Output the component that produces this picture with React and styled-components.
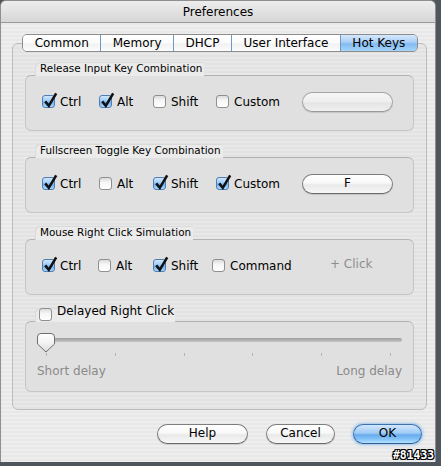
import React from 'react';
import styled, { createGlobalStyle } from 'styled-components';

const Global = createGlobalStyle`
  html, body { margin: 0; padding: 0; }
  body {
    width: 441px; height: 466px; overflow: hidden;
    background: #4e555d;
    font-family: "DejaVu Sans", "Liberation Sans", sans-serif;
    color: #000;
  }
`;

const Page = styled.div`
  position: relative;
  width: 441px;
  height: 466px;
`;

const Window = styled.div`
  width: 436px;
  height: 462px;
  box-sizing: border-box;
  border: 1px solid #8f8f8f;
  border-bottom: none;
  border-radius: 6px 6px 0 0;
  overflow: hidden;
  display: flex;
  flex-direction: column;
  background: repeating-linear-gradient(to bottom, #eeeeee 0px, #eeeeee 2px, #e8e8e8 2px, #e8e8e8 4px);
`;

const TitleBar = styled.div`
  height: 22px;
  box-sizing: border-box;
  flex: none;
  border-bottom: 1px solid #9a9a9a;
  background: linear-gradient(#ededed, #e2e2e2 50%, #d6d6d6);
  display: flex;
  align-items: center;
  justify-content: center;
  font-size: 12px;
  line-height: 14px;
  padding-top: 1px;
`;

const Body = styled.div`
  flex: 1;
  display: flex;
  flex-direction: column;
  padding: 11px 8px 0 11px;
`;

const TabRow = styled.div`
  display: flex;
  align-self: center;
  height: 18px;
  box-sizing: border-box;
  border: 1px solid #8c8c8c;
  border-radius: 5px;
  overflow: hidden;
  position: relative;
  z-index: 1;
  margin-left: 1px;
`;

const Tab = styled.div`
  padding: 0 11.5px;
  font-size: 12px;
  line-height: 16px;
  white-space: nowrap;
  background: ${p => p.$active
    ? 'linear-gradient(#d6e8fc 0%, #a9cff5 45%, #82bbf1 55%, #a6d4fb 100%)'
    : 'linear-gradient(#ffffff 0%, #fbfbfb 50%, #f1f1f1 55%, #fcfcfc 100%)'};
  & + & { border-left: 1px solid ${p => p.$active ? '#6f98c8' : '#c9c9c9'}; }
`;

const Panel = styled.div`
  margin-top: -9px;
  border: 1px solid #bcbcbc;
  border-radius: 6px;
  background: rgba(0, 0, 0, 0.025);
  padding: 18px 12px 17px 12px;
  display: flex;
  flex-direction: column;
  gap: 13px;
`;

const Group = styled.div`
  display: flex;
  flex-direction: column;
  align-items: flex-start;
`;

const GroupLabel = styled.div`
  margin-left: 10px;
  margin-bottom: -1px;
  height: 14px;
  padding: 0 2px 0 5px;
  display: flex;
  align-items: flex-start;
  gap: 5px;
  font-size: ${p => p.$small ? '10.4px' : '12px'};
  line-height: 13px;
  background: #ebebeb;
  border-top-left-radius: 5px;
  box-shadow: inset 1px 1px 0 rgba(0, 0, 0, 0.07);
  position: relative;
  z-index: 1;
  ${p => p.$check ? 'padding-left: 4px; padding-right: 1px;' : ''}
`;

const LabelText = styled.span`
  margin-top: -3px;
`;

const GroupBox = styled.div`
  align-self: stretch;
  height: ${p => p.$h}px;
  box-sizing: border-box;
  border: 1px solid #c6c6c6;
  border-top-color: #b2b2b2;
  border-radius: 6px;
  background: #e0e0e0;
  display: flex;
  flex-direction: column;
`;

const Row = styled.div`
  flex: 1;
  display: grid;
  grid-template-columns: ${p => p.$cols};
  align-items: center;
  padding: 0 0 3px 16px;
`;

const CheckItem = styled.label`
  display: flex;
  align-items: center;
  gap: 5px;
  font-size: 12px;
  line-height: 14px;
  white-space: nowrap;
`;

const CheckBox = styled.span`
  position: relative;
  flex: none;
  width: 13px;
  height: 13px;
  box-sizing: border-box;
  border-radius: 3px;
  border: 1px solid ${p => p.$checked ? '#4d7db5' : '#8f8f8f'};
  background: ${p => p.$checked
    ? 'linear-gradient(#cfe5fc 0%, #9ecbf5 45%, #6eadef 55%, #a9d8fc 100%)'
    : 'linear-gradient(#dcdcdc 0%, #f6f6f6 40%, #ffffff 100%)'};
`;

const Tick = styled.svg`
  position: absolute;
  left: 0px;
  top: -3px;
  width: 14px;
  height: 15px;
  overflow: visible;
`;

const PillButton = styled.div`
  width: ${p => p.$w}px;
  height: 20px;
  box-sizing: border-box;
  border-radius: 10px;
  border: 1px solid ${p => p.$primary ? '#3f72ad' : p.$dim ? '#a6a6a6' : '#7d7d7d'};
  border-bottom-color: ${p => p.$primary ? '#2d5d96' : p.$dim ? '#9a9a9a' : '#6a6a6a'};
  background: ${p => p.$primary
    ? 'linear-gradient(#d2e7fc 0%, #9fcbf5 45%, #67abee 55%, #8fcbfa 85%, #b8e2fd 100%)'
    : p.$dim
      ? 'linear-gradient(#f6f6f6 0%, #eeeeee 50%, #e4e4e4 55%, #f0f0f0 100%)'
      : 'linear-gradient(#ffffff 0%, #f8f8f8 45%, #e9e9e9 55%, #f7f7f7 100%)'};
  box-shadow: ${p => p.$primary ? '0 0 3px 1px rgba(90, 160, 235, 0.55)' : '0 1px 1px rgba(0,0,0,0.12)'};
  display: flex;
  align-items: center;
  justify-content: center;
  font-size: 12px;
  line-height: 14px;
  padding-bottom: 2px;
`;

const Hint = styled.span`
  font-size: 12px;
  color: #8e8e8e;
  margin-top: -3px;
`;

const SliderWrap = styled.div`
  padding: 11px 11px 0 11px;
  display: flex;
  flex-direction: column;
`;

const SliderArea = styled.div`
  position: relative;
  height: 19px;
`;

const Track = styled.div`
  margin-top: 5px;
  height: 4px;
  border-radius: 2px;
  background: linear-gradient(#9d9d9d, #c4c4c4);
`;

const Thumb = styled.svg`
  position: absolute;
  left: 0;
  top: 0;
  width: 18px;
  height: 20px;
`;

const Ticks = styled.div`
  margin-top: 1px;
  height: 3px;
  display: flex;
  justify-content: space-between;
  padding: 0 11px 0 9px;
`;

const TickMark = styled.span`
  width: 1px;
  height: 3px;
  background: #b4b4b4;
`;

const SliderLabels = styled.div`
  margin-top: 8px;
  display: flex;
  justify-content: space-between;
  font-size: 12px;
  line-height: 15px;
  color: #8a8a8a;
`;

const Footer = styled.div`
  display: flex;
  justify-content: flex-end;
  gap: 18px;
  margin: 14px 5px 0 0;
`;

const Watermark = styled.div`
  position: absolute;
  left: 393px;
  top: 449px;
  font-family: "DejaVu Sans Mono", monospace;
  font-weight: bold;
  font-size: 11.4px;
  line-height: 13px;
  color: #fff;
  text-shadow: 1px 0 0 #000, -1px 0 0 #000, 0 1px 0 #000, 0 -1px 0 #000, 1px 1px 0 #000, -1px -1px 0 #000, 1px -1px 0 #000, -1px 1px 0 #000;
`;

function Check({ checked, label }) {
  return (
    <CheckItem>
      <CheckBox $checked={checked}>
        {checked && (
          <Tick viewBox="0 0 14 15">
            <path d="M2.2 8.4 L5.8 12.8 L13.2 0.4" fill="none" stroke="#111" strokeWidth="2.6" strokeLinejoin="miter" />
          </Tick>
        )}
      </CheckBox>
      {label}
    </CheckItem>
  );
}

const tabs = ['Common', 'Memory', 'DHCP', 'User Interface', 'Hot Keys'];

export default function App() {
  return (
    <Page>
      <Global />
      <Window>
        <TitleBar>Preferences</TitleBar>
        <Body>
          <TabRow>
            {tabs.map(t => <Tab key={t} $active={t === 'Hot Keys'}>{t}</Tab>)}
          </TabRow>
          <Panel>
            <Group>
              <GroupLabel $small>Release Input Key Combination</GroupLabel>
              <GroupBox $h={56}>
                <Row $cols="57px 54px 63px 86px 91px">
                  <Check checked label="Ctrl" />
                  <Check checked label="Alt" />
                  <Check label="Shift" />
                  <Check label="Custom" />
                  <PillButton $w={91} $dim />
                </Row>
              </GroupBox>
            </Group>
            <Group>
              <GroupLabel $small>Fullscreen Toggle Key Combination</GroupLabel>
              <GroupBox $h={56}>
                <Row $cols="57px 54px 63px 86px 91px">
                  <Check checked label="Ctrl" />
                  <Check label="Alt" />
                  <Check checked label="Shift" />
                  <Check checked label="Custom" />
                  <PillButton $w={91}>F</PillButton>
                </Row>
              </GroupBox>
            </Group>
            <Group>
              <GroupLabel $small>Mouse Right Click Simulation</GroupLabel>
              <GroupBox $h={56}>
                <Row $cols="56px 55px 59px 118px auto">
                  <Check checked label="Ctrl" />
                  <Check label="Alt" />
                  <Check checked label="Shift" />
                  <Check label="Command" />
                  <Hint>+ Click</Hint>
                </Row>
              </GroupBox>
            </Group>
            <Group>
              <GroupLabel $check>
                <CheckBox />
                <LabelText>Delayed Right Click</LabelText>
              </GroupLabel>
              <GroupBox $h={71}>
                <SliderWrap>
                  <SliderArea>
                    <Track />
                    <Thumb viewBox="0 0 18 20">
                      <defs>
                        <linearGradient id="thumbG" x1="0" y1="0" x2="0" y2="1">
                          <stop offset="0" stopColor="#ffffff" />
                          <stop offset="0.5" stopColor="#f2f2f2" />
                          <stop offset="1" stopColor="#dcdcdc" />
                        </linearGradient>
                      </defs>
                      <path d="M4 0.5 H14 A3.5 3.5 0 0 1 17.5 4 V11 L9 19 L0.5 11 V4 A3.5 3.5 0 0 1 4 0.5 Z" fill="url(#thumbG)" stroke="#6e6e6e" strokeWidth="1" />
                    </Thumb>
                  </SliderArea>
                  <Ticks>
                    {[0, 1, 2, 3, 4, 5].map(i => <TickMark key={i} />)}
                  </Ticks>
                  <SliderLabels>
                    <span>Short delay</span>
                    <span>Long delay</span>
                  </SliderLabels>
                </SliderWrap>
              </GroupBox>
            </Group>
          </Panel>
          <Footer>
            <PillButton $w={91}>Help</PillButton>
            <PillButton $w={69}>Cancel</PillButton>
            <PillButton $w={69} $primary>OK</PillButton>
          </Footer>
        </Body>
      </Window>
      <Watermark>#81433</Watermark>
    </Page>
  );
}
